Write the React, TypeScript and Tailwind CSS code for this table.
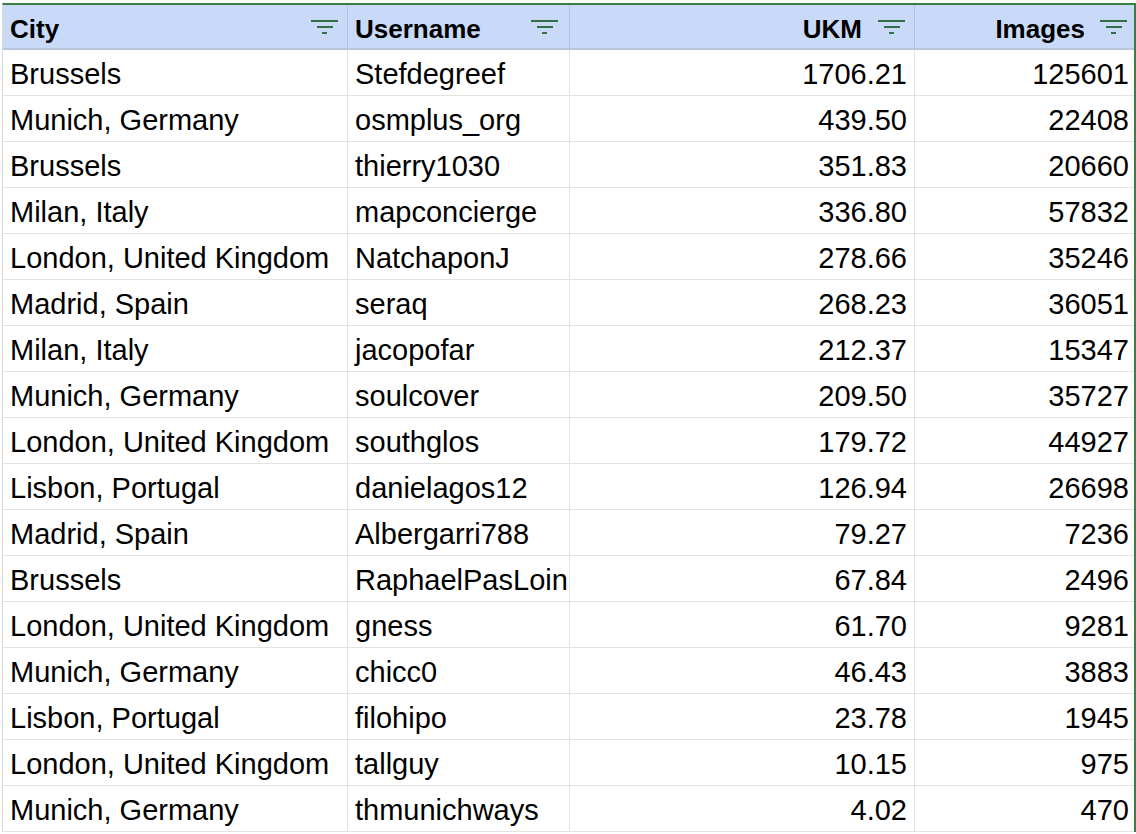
import React from 'react';

type Row = { city: string; user: string; ukm: string; images: string };

const rows: Row[] = [
  { city: 'Brussels', user: 'Stefdegreef', ukm: '1706.21', images: '125601' },
  { city: 'Munich, Germany', user: 'osmplus_org', ukm: '439.50', images: '22408' },
  { city: 'Brussels', user: 'thierry1030', ukm: '351.83', images: '20660' },
  { city: 'Milan, Italy', user: 'mapconcierge', ukm: '336.80', images: '57832' },
  { city: 'London, United Kingdom', user: 'NatchaponJ', ukm: '278.66', images: '35246' },
  { city: 'Madrid, Spain', user: 'seraq', ukm: '268.23', images: '36051' },
  { city: 'Milan, Italy', user: 'jacopofar', ukm: '212.37', images: '15347' },
  { city: 'Munich, Germany', user: 'soulcover', ukm: '209.50', images: '35727' },
  { city: 'London, United Kingdom', user: 'southglos', ukm: '179.72', images: '44927' },
  { city: 'Lisbon, Portugal', user: 'danielagos12', ukm: '126.94', images: '26698' },
  { city: 'Madrid, Spain', user: 'Albergarri788', ukm: '79.27', images: '7236' },
  { city: 'Brussels', user: 'RaphaelPasLoin', ukm: '67.84', images: '2496' },
  { city: 'London, United Kingdom', user: 'gness', ukm: '61.70', images: '9281' },
  { city: 'Munich, Germany', user: 'chicc0', ukm: '46.43', images: '3883' },
  { city: 'Lisbon, Portugal', user: 'filohipo', ukm: '23.78', images: '1945' },
  { city: 'London, United Kingdom', user: 'tallguy', ukm: '10.15', images: '975' },
  { city: 'Munich, Germany', user: 'thmunichways', ukm: '4.02', images: '470' },
];

// Sheets-style filter glyph: three bars getting shorter
function FilterIcon() {
  return (
    <svg width="27" height="14" viewBox="0 0 27 14" className="shrink-0 self-end mb-[8px]">
      <rect x="0" y="0" width="27" height="2" fill="#356f45" />
      <rect x="6" y="6" width="16" height="2" fill="#356f45" />
      <rect x="11" y="12" width="5" height="2" fill="#356f45" />
    </svg>
  );
}

const font = { fontFamily: '"Liberation Sans", Arial, sans-serif' };

export default function App() {
  return (
    <div className="w-[1136px] h-[834px] overflow-hidden bg-white pt-[3px] pl-[2px]" style={font}>
      <div className="border-t-2 border-r-2 border-l border-t-[#3a7d44] border-r-[#3a7d44] border-l-[#dadada] grid grid-cols-[345px_222px_345px_219px]">
        {/* header */}
        <div className="h-[45px] bg-[#c9daf8] border-r border-r-[#b3c2dc] border-b-2 border-b-[#b7c5de] flex items-end justify-between pl-[7px] pr-[9px] pb-[6px]">
          <span className="text-[26px] font-bold text-black leading-none">City</span>
          <FilterIcon />
        </div>
        <div className="h-[45px] bg-[#c9daf8] border-r border-r-[#b3c2dc] border-b-2 border-b-[#b7c5de] flex items-end justify-between pl-[7px] pr-[11px] pb-[6px]">
          <span className="text-[26px] font-bold text-black leading-none">Username</span>
          <FilterIcon />
        </div>
        <div className="h-[45px] bg-[#c9daf8] border-r border-r-[#b3c2dc] border-b-2 border-b-[#b7c5de] flex items-end justify-end gap-[16px] pr-[9px] pb-[6px]">
          <span className="text-[26px] font-bold text-black leading-none">UKM</span>
          <FilterIcon />
        </div>
        <div className="h-[45px] bg-[#c9daf8] border-b-2 border-b-[#b7c5de] flex items-end justify-end gap-[15px] pr-[7px] pb-[6px]">
          <span className="text-[26px] font-bold text-black leading-none">Images</span>
          <FilterIcon />
        </div>

        {rows.map((r, i) => (
          <React.Fragment key={i}>
            <div className="h-[46px] border-r border-b border-[#e2e2e2] flex items-center pl-[7px] pt-[4px] overflow-hidden whitespace-nowrap text-[29px] text-black">
              {r.city}
            </div>
            <div className="h-[46px] border-r border-b border-[#e2e2e2] flex items-center pl-[7px] pt-[4px] overflow-hidden whitespace-nowrap text-[29px] text-black">
              {r.user}
            </div>
            <div className="h-[46px] border-r border-b border-[#e2e2e2] flex items-center justify-end pr-[7px] pt-[4px] overflow-hidden whitespace-nowrap text-[29px] text-black">
              {r.ukm}
            </div>
            <div className="h-[46px] border-b border-[#e2e2e2] flex items-center justify-end pr-[5px] pt-[4px] overflow-hidden whitespace-nowrap text-[29px] text-black">
              {r.images}
            </div>
          </React.Fragment>
        ))}
      </div>
    </div>
  );
}
